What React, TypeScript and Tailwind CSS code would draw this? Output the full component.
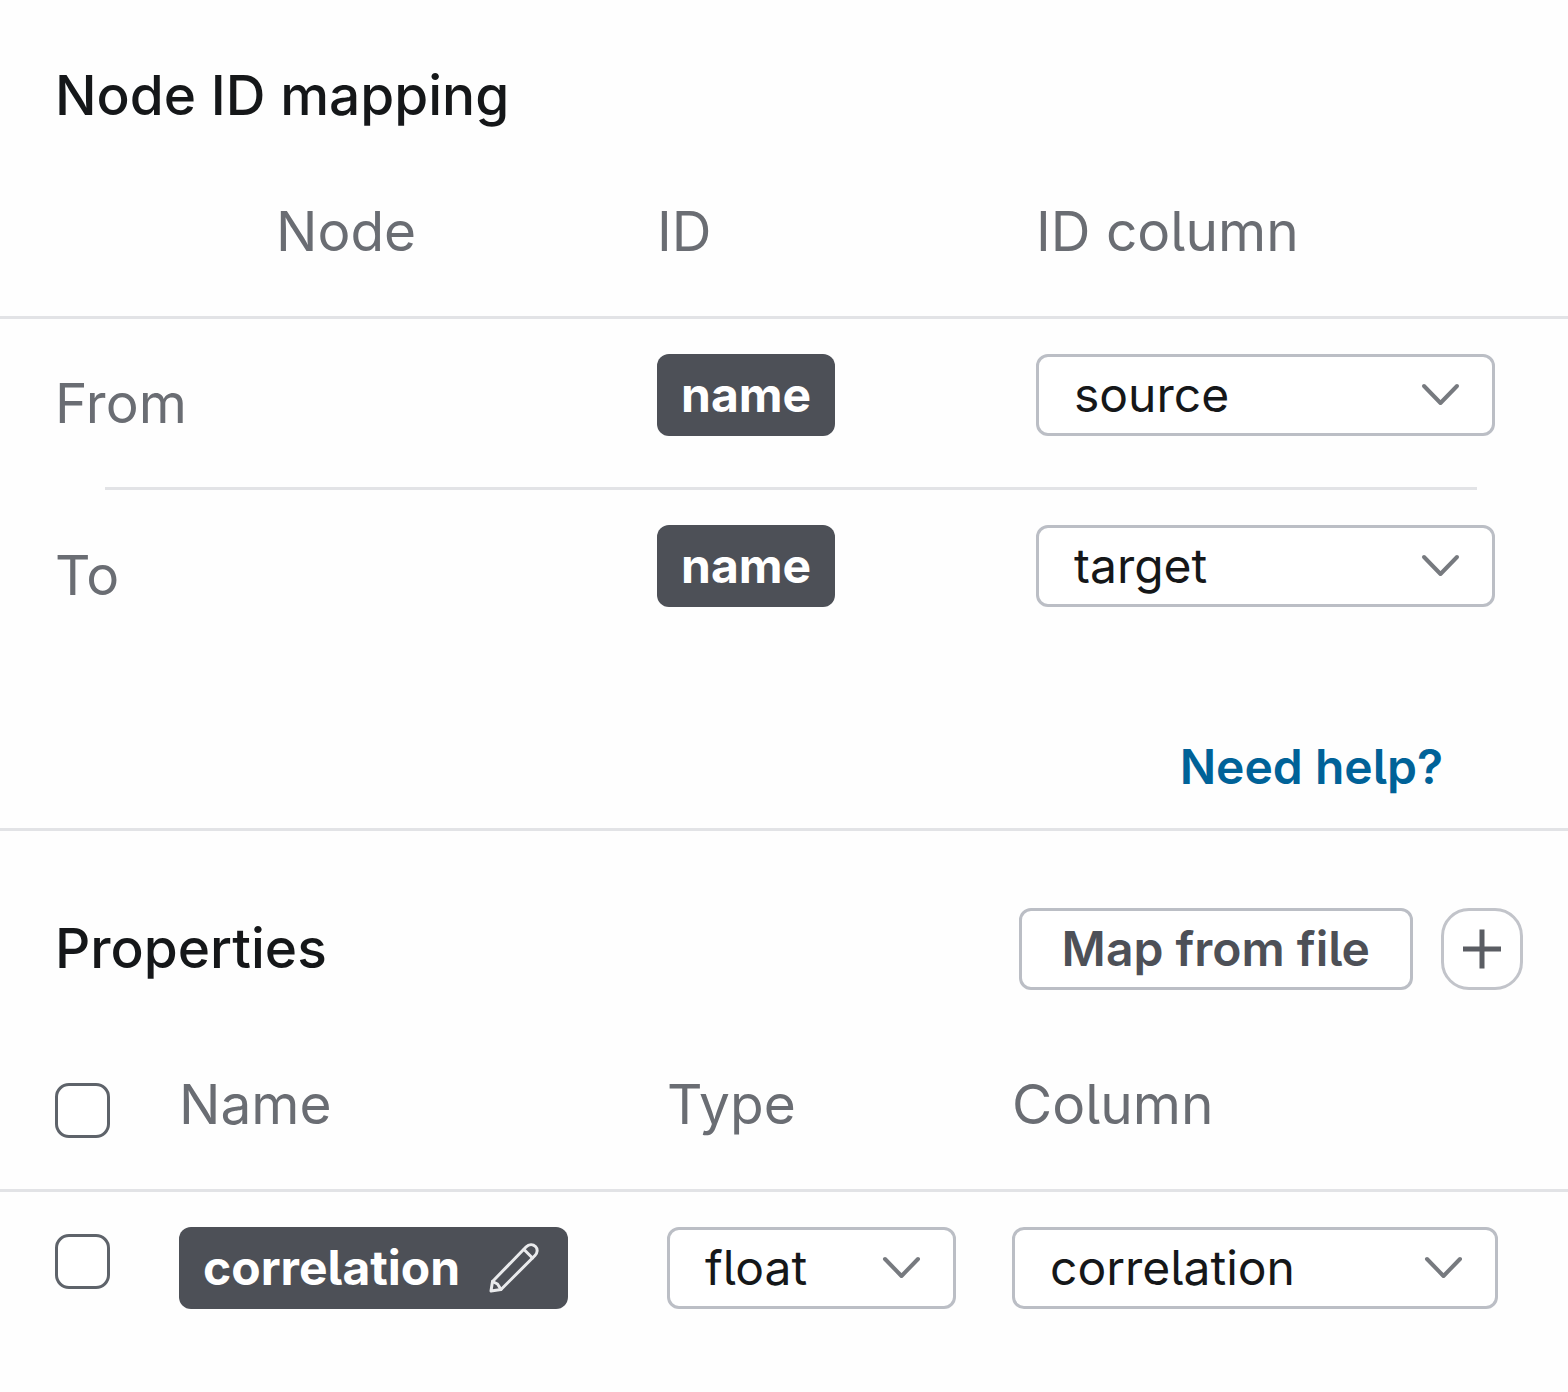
import { useState } from "react";
import type { ReactNode } from "react";

function ChevronIcon() {
  return (
    <svg
      className="pointer-events-none absolute top-1/2 right-[35px] h-6 w-10 -translate-y-1/2"
      viewBox="0 0 40 24"
      fill="none"
      stroke="#777a7f"
      strokeWidth="4"
      strokeLinecap="round"
      strokeLinejoin="round"
      aria-hidden="true"
    >
      <path d="M4 3 L20.5 20 L37 3" />
    </svg>
  );
}

function PencilIcon() {
  return (
    <svg
      className="h-[52px] w-[52px]"
      viewBox="0 0 52 52"
      fill="none"
      stroke="#e9eaec"
      strokeWidth="3"
      strokeLinecap="round"
      strokeLinejoin="round"
      aria-hidden="true"
    >
      <path d="M3 49 L4.5 39.500 L38 5 C41 2 45 2 47.500 4.500 C50 7 49.500 11 47 13.500 L13 47.500 Z" />
      <path d="M36 7.500 L44.500 16 M4.500 39.500 L9.500 42 L13 47.500" />
    </svg>
  );
}

function PlusIcon() {
  return (
    <svg
      className="h-10 w-10"
      viewBox="0 0 40 40"
      fill="none"
      stroke="#5a5d63"
      strokeWidth="5"
      aria-hidden="true"
    >
      <path d="M20 0.500 V39.500 M1 20 H39" />
    </svg>
  );
}

function SelectBox({ label, options }: { label: string; options: string[] }) {
  const [value, setValue] = useState(options[0]);
  return (
    <div className="relative w-full">
      <select
        aria-label={label}
        value={value}
        onChange={(e) => setValue(e.target.value)}
        className="block h-[82px] w-full appearance-none rounded-xl border-3 border-[#bbbec5] bg-white pr-20 pl-[35px] text-[48px] leading-[60px] text-[#151719]"
      >
        {options.map((option) => (
          <option key={option}>{option}</option>
        ))}
      </select>
      <ChevronIcon />
    </div>
  );
}

function Badge({ children }: { children: ReactNode }) {
  return (
    <span className="flex h-[82px] w-fit items-center rounded-xl bg-[#4d5057] px-6 text-[48px] leading-[60px] font-bold text-white">
      {children}
    </span>
  );
}

function Checkbox({ label }: { label: string }) {
  return (
    <input
      type="checkbox"
      aria-label={label}
      className="block h-[55px] w-[55px] appearance-none rounded-[14px] border-3 border-[#5e636a] bg-white checked:bg-[#4d5057]"
    />
  );
}

function ColumnHeader({ children }: { children?: ReactNode }) {
  return (
    <th scope="col" className="pb-[53px] align-bottom font-normal">
      {children}
    </th>
  );
}

const mappings = [
  { end: "From", id: "name", columns: ["source", "target"] },
  { end: "To", id: "name", columns: ["target", "source"] },
];

function NodeMapping() {
  return (
    <section className="border-b-3 border-[#e2e3e6] pt-[63px] pb-[33px]">
      <h2 className="pl-[55px] text-[55px] leading-[64px] font-medium text-[#151719]">Node ID mapping</h2>
      <table className="w-full table-fixed text-left text-[55px] leading-[64px] text-[#6a6d73]">
        <colgroup>
          <col className="w-[276px]" />
          <col className="w-[381px]" />
          <col className="w-[379px]" />
          <col />
        </colgroup>
        <thead>
          <tr className="h-[190px] border-b-3 border-[#e2e3e6]">
            <td />
            <ColumnHeader>Node</ColumnHeader>
            <ColumnHeader>ID</ColumnHeader>
            <ColumnHeader>ID column</ColumnHeader>
          </tr>
        </thead>
        {mappings.map((row, i) => (
          <tbody key={row.end}>
            {i > 0 && (
              <tr>
                <td colSpan={4} className="pr-[91px] pl-[105px]">
                  <hr className="border-t-3 border-[#e2e3e6]" />
                </td>
              </tr>
            )}
            <tr className="h-[170px]">
              <th scope="row" className="pl-[55px] font-normal">
                {row.end}
              </th>
              <td />
              <td className="pt-[35px] align-top">
                <Badge>{row.id}</Badge>
              </td>
              <td className="pt-[35px] pr-[73px] align-top">
                <SelectBox label={`${row.end} ID column`} options={row.columns} />
              </td>
            </tr>
          </tbody>
        ))}
      </table>
      <div className="flex justify-end pt-[79px] pr-[125px]">
        <a href="#help" className="text-[48px] leading-[56px] font-semibold text-[#006298]">
          Need help?
        </a>
      </div>
    </section>
  );
}

function Properties() {
  return (
    <section className="pt-[77px]">
      <div className="flex items-start justify-between pr-[45px] pl-[55px]">
        <h2 className="text-[55px] leading-[80px] font-medium text-[#151719]">Properties</h2>
        <div className="flex gap-7">
          <button
            type="button"
            className="h-[82px] rounded-xl border-3 border-[#bbbec5] bg-white px-10 text-[48px] leading-[60px] font-semibold text-[#4d5057]"
          >
            Map from file
          </button>
          <button
            type="button"
            aria-label="Add property"
            className="flex h-[82px] w-[82px] items-center justify-center rounded-[28px] border-3 border-[#c2c4ca] bg-white"
          >
            <PlusIcon />
          </button>
        </div>
      </div>
      <table className="w-full table-fixed text-left text-[55px] leading-[64px] text-[#6a6d73]">
        <colgroup>
          <col className="w-[179px]" />
          <col className="w-[488px]" />
          <col className="w-[345px]" />
          <col />
        </colgroup>
        <thead>
          <tr className="h-[200px] border-b-3 border-[#e2e3e6]">
            <td className="pt-[93px] pl-[55px] align-top">
              <Checkbox label="Select all properties" />
            </td>
            <ColumnHeader>Name</ColumnHeader>
            <ColumnHeader>Type</ColumnHeader>
            <ColumnHeader>Column</ColumnHeader>
          </tr>
        </thead>
        <tbody>
          <tr className="h-[170px]">
            <td className="pt-[42px] pl-[55px] align-top">
              <Checkbox label="Select correlation" />
            </td>
            <td className="pt-[35px] align-top">
              <Badge>
                correlation
                <button type="button" aria-label="Rename correlation" className="mr-1 ml-7">
                  <PencilIcon />
                </button>
              </Badge>
            </td>
            <td className="pt-[35px] pr-14 align-top">
              <SelectBox label="Type" options={["float", "integer", "string"]} />
            </td>
            <td className="pt-[35px] pr-[70px] align-top">
              <SelectBox label="Column" options={["correlation", "source", "target"]} />
            </td>
          </tr>
        </tbody>
      </table>
    </section>
  );
}

export default function App() {
  return (
    <main className="min-h-screen bg-[#fefefe] font-['Inter',sans-serif] [font-feature-settings:'cv05']">
      <NodeMapping />
      <Properties />
    </main>
  );
}
